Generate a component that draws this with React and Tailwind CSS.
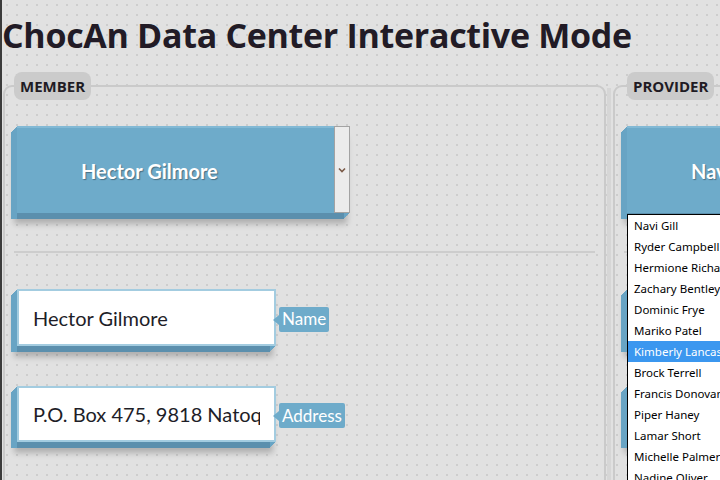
import React from 'react'

const providers = [
  'Navi Gill',
  'Ryder Campbell',
  'Hermione Richards',
  'Zachary Bentley',
  'Dominic Frye',
  'Mariko Patel',
  'Kimberly Lancaster',
  'Brock Terrell',
  'Francis Donovan',
  'Piper Haney',
  'Lamar Short',
  'Michelle Palmer',
  'Nadine Oliver',
]

const blueBevel =
  'shadow-[-3px_9px_0_-3px_#5b8fad,-1px_1px_0_#68a4c4,-2px_2px_0_#68a4c4,-3px_3px_0_#68a4c4,-4px_4px_0_#68a4c4,-5px_5px_0_#68a4c4,-6px_6px_0_#68a4c4,-3px_11px_6px_rgba(0,0,0,0.22)]'

function SelectBox({ value }) {
  return (
    <div className={`ml-[12px] flex h-[87px] w-[333px] border-t-2 border-[#82b9d5] bg-[#6eabca] ${blueBevel}`}>
      <div className="flex flex-1 items-center pl-16 font-['Lato',sans-serif] text-[20px] font-bold whitespace-nowrap text-white [text-shadow:1px_1px_1px_rgba(0,0,0,0.35)]">
        {value}
      </div>
      <div className="-mt-[2px] flex w-[16px] items-center justify-center border border-[#a3a3a3] bg-[#ececec]">
        <svg width="8" height="6" viewBox="0 0 8 6">
          <path d="M1 1.5 L4 4.5 L7 1.5" fill="none" stroke="#7a5a48" strokeWidth="1.6" />
        </svg>
      </div>
    </div>
  )
}

function Field({ value, label, height }) {
  return (
    <div className="flex items-center">
      <div
        className={`ml-[12px] flex w-[259px] items-center border-2 border-[#a3cce0] bg-white px-[14px] font-['Lato',sans-serif] text-[20px] whitespace-nowrap text-[#1e1e28] ${height} ${blueBevel}`}
      >
        <div className="flex-1 overflow-hidden">{value}</div>
      </div>
      <div className="relative ml-[3px] mt-[3px] flex h-[25px] items-center rounded-[2px] bg-[#6eabca] px-[3px] font-['Lato',sans-serif] text-[17px] text-white">
        <span className="absolute -left-[6px] top-[8px] h-0 w-0 border-y-[5px] border-r-[6px] border-y-transparent border-r-[#6eabca]" />
        {label}
      </div>
    </div>
  )
}

function Panel({ title, name, address, width }) {
  return (
    <fieldset className={`rounded-[9px] border-2 border-[#cacaca] pb-24 ${width}`}>
      <legend className="ml-[9px] rounded-[8px] bg-[#cbcbcb] px-[6px] font-['Open_Sans',sans-serif] text-[15px] leading-[28px] font-bold text-[#1f1b24]">
        {title}
      </legend>
      <div className="pt-[26px]">
        <SelectBox value={name} />
        <div className="mx-[9px] mt-[38px] h-[2px] bg-[#cdcdcd]" />
        <div className="mt-[36px]">
          <Field value={name} label="Name" height="h-[57px]" />
        </div>
        <div className="mt-[40px]">
          <Field value={address} label="Address" height="h-[56px]" />
        </div>
      </div>
    </fieldset>
  )
}

export default function App() {
  return (
    <div className="relative h-[480px] w-[720px] overflow-hidden border-l-2 border-[#3b3b3b] bg-[#e1e1e1] bg-[radial-gradient(circle,#cdcdcd_1px,transparent_1.5px)] bg-size-[10px_10px]">
      <h1 className="h-[72px] pt-[13px] font-['Open_Sans',sans-serif] text-[34px] leading-[44px] font-bold tracking-[-0.3px] whitespace-nowrap text-[#221b26]">
        ChocAn Data Center Interactive Mode
      </h1>
      <div className="flex items-start pl-[1px]">
        <Panel
          title="MEMBER"
          name="Hector Gilmore"
          address="P.O. Box 475, 9818 Natoque Ave."
          width="w-[603px] shrink-0"
        />
        <div className="mx-[1px] mt-[16px] h-[420px] w-[4px] shrink-0 bg-[#d6d6d6]" />
        <div className="relative shrink-0">
          <Panel
            title="PROVIDER"
            name="Navi Gill"
            address="8213 Dolor Street"
            width="w-[400px] ml-[1px] [&_legend]:ml-[12px]"
          />
          <ul className="absolute left-[15px] top-[142px] w-[170px] border border-black bg-white font-['Noto_Sans',sans-serif] text-[11.5px] text-black">
            {providers.map((p, i) => (
              <li
                key={p}
                className={`h-[21px] pl-[6px] leading-[21px] whitespace-nowrap ${i === 6 ? 'bg-[#3b97ef] text-white' : ''}`}
              >
                {p}
              </li>
            ))}
          </ul>
        </div>
      </div>
    </div>
  )
}
